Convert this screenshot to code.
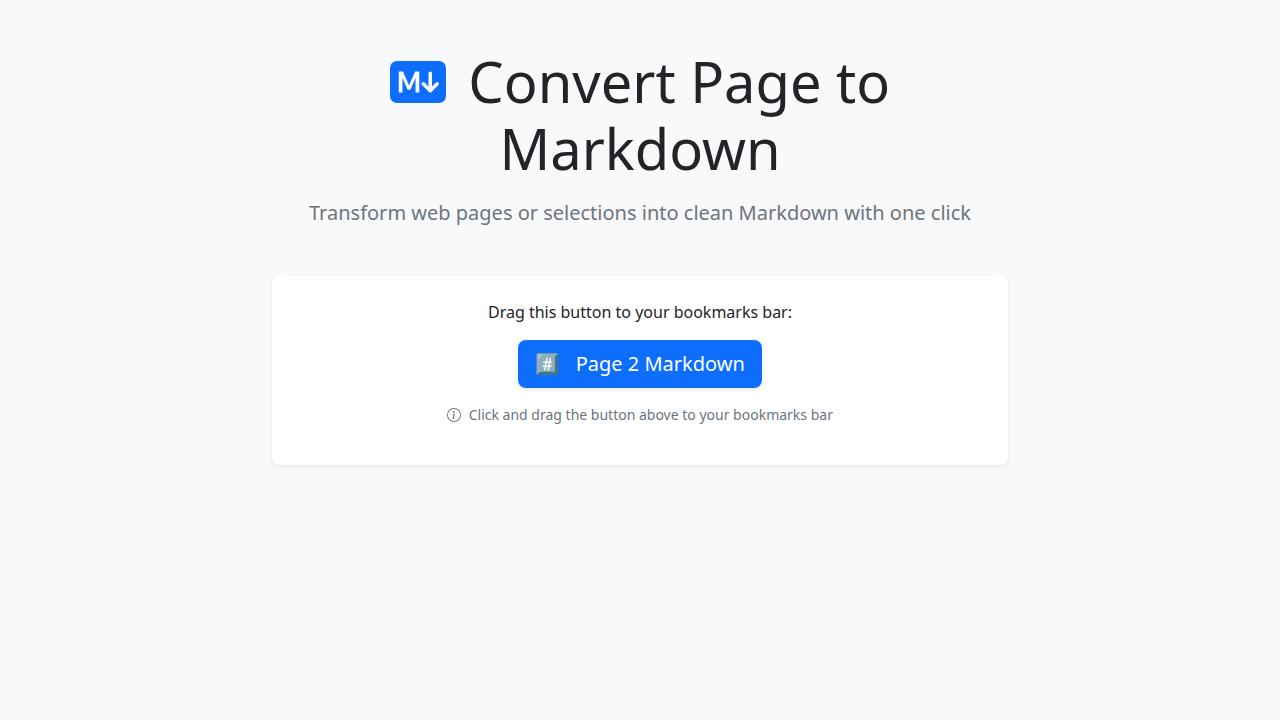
<main class="container">
  <header>
    <h1>
      <svg class="mark" viewBox="0 0 16 16" fill="currentColor" aria-hidden="true">
        <path fill-rule="evenodd" d="M2 2h12a2 2 0 0 1 2 2v8a2 2 0 0 1-2 2H2a2 2 0 0 1-2-2V4a2 2 0 0 1 2-2m7.146 6.146a.5.5 0 0 1 .708 0L11 9.293V5.5a.5.5 0 0 1 1 0v3.793l1.146-1.147a.5.5 0 0 1 .708.708l-2 2a.5.5 0 0 1-.708 0l-2-2a.5.5 0 0 1 0-.708M3.56 7.01V11H2.5V5.001h1.208l1.71 3.894h.04l1.709-3.894h1.2V11H7.294V7.01h-.057l-1.42 3.239h-.773L3.617 7.01z" />
      </svg>
      Convert Page to Markdown
    </h1>
    <p class="lead">Transform web pages or selections into clean Markdown with one click</p>
  </header>
  <section class="card">
    <p class="prompt">Drag this button to your bookmarks bar:</p>
    <a class="bookmarklet" href="#bookmarklet">#️⃣ &nbsp; Page 2 Markdown</a>
    <p class="hint">
      <svg viewBox="0 0 16 16" fill="currentColor" aria-hidden="true">
        <path d="M8 15A7 7 0 1 1 8 1a7 7 0 0 1 0 14m0 1A8 8 0 1 0 8 0a8 8 0 0 0 0 16" />
        <path d="m8.93 6.588-2.29.287-.082.38.45.083c.294.07.352.176.288.469l-.738 3.468c-.194.897.105 1.319.808 1.319.545 0 1.178-.252 1.465-.598l.088-.416c-.2.176-.492.246-.686.246-.275 0-.375-.193-.304-.533zM9 4.5a1 1 0 1 1-2 0 1 1 0 0 1 2 0" />
      </svg>
      Click and drag the button above to your bookmarks bar
    </p>
  </section>
</main>

<style>
  :global(body) {
    margin: 0;
    background: #f8f9fa;
    color: #212529;
    font: 16px/24px "Noto Sans", "Liberation Sans", "Noto Color Emoji", sans-serif;
  }
  .container {
    box-sizing: border-box;
    max-width: 768px;
    margin: 0 auto;
    padding: 48px 16px;
    text-align: center;
  }
  header {
    margin-bottom: 48px;
  }
  h1 {
    margin: 0 0 16px;
    font-size: 56px;
    line-height: 67px;
    font-weight: 400;
  }
  .mark {
    width: 56px;
    height: 56px;
    margin-right: 8px;
    vertical-align: -7px;
    color: #0d6efd;
  }
  .lead {
    margin: 0;
    font-size: 20px;
    line-height: 30px;
    color: #6c757d;
  }
  .card {
    padding: 24px 24px 40px;
    border-radius: 8px;
    background: #fff;
    box-shadow: 0 2px 4px rgba(0, 0, 0, 0.075);
  }
  .prompt {
    margin: 0 0 16px;
  }
  .bookmarklet {
    display: inline-block;
    padding: 9px 17px;
    border-radius: 8px;
    background: #0d6efd;
    box-shadow: 0 2px 4px rgba(0, 0, 0, 0.075);
    color: #fff;
    font-size: 20px;
    line-height: 30px;
    text-decoration: none;
    vertical-align: middle;
  }
  .hint {
    margin: 16px 0 0;
    font-size: 14px;
    line-height: 21px;
    color: #6c757d;
  }
  .hint svg {
    width: 14px;
    height: 14px;
    margin-right: 4px;
    vertical-align: -2px;
  }
</style>
